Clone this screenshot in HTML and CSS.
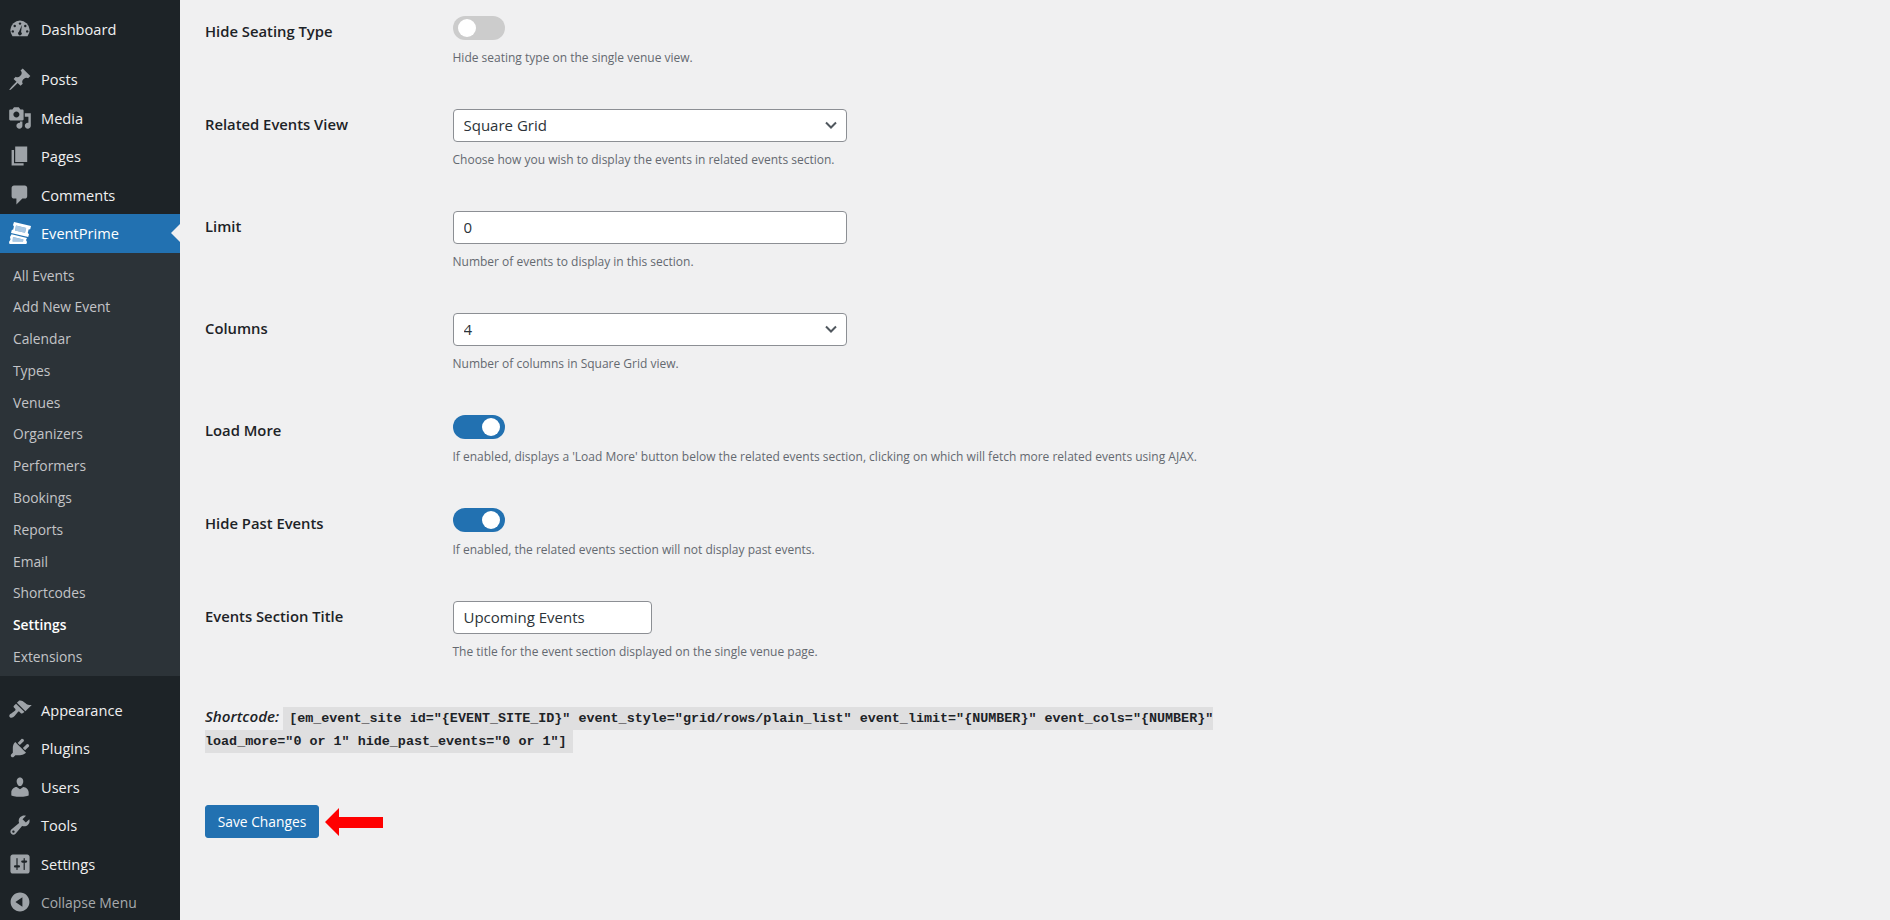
FILE: index.html
```html
<!DOCTYPE html>
<html lang="en">
<head>
    <meta charset="UTF-8">
    <meta name="viewport" content="width=device-width, initial-scale=1.0">
    <title>Venue Settings</title>
    <link rel="stylesheet" href="styles.css">
</head>
<body>
    <nav class="sidebar">
        <ul class="menu">
            <li class="menu-item group-end">
                <svg class="menu-icon" viewBox="0 0 20 20"><path d="M3.76 16h12.48A8 8 0 1 0 3.76 16z"/><g fill="#1d2327"><circle cx="10" cy="5.5" r="1"/><circle cx="5.6" cy="7.5" r="1"/><circle cx="14.4" cy="7.5" r="1"/><circle cx="4" cy="12" r="1"/><circle cx="16" cy="12" r="1"/><path d="M11.6 6.6L10.9 12.4a1.6 1.6 0 1 1-1.8-.1z"/></g></svg>
                <span>Dashboard</span>
            </li>
            <li class="menu-item">
                <svg class="menu-icon" viewBox="0 0 20 20"><path d="M10.44 3.02l1.82-1.82 6.36 6.35-1.83 1.82c-1.05-.68-2.48-.57-3.41.36l-.75.75c-.92.93-1.04 2.35-.35 3.41l-1.83 1.82-2.41-2.41-2.89 2.89c-1.95 1.95-3.75 3.3-4.02 3.03-.27-.27 1.08-2.07 3.03-4.02l2.89-2.89-2.41-2.41 1.82-1.83c1.06.69 2.48.57 3.41-.35l.75-.75c.93-.93 1.04-2.36.36-3.41z"/></svg>
                <span>Posts</span>
            </li>
            <li class="menu-item">
                <svg class="menu-icon" viewBox="0 0 20 20"><path fill-rule="evenodd" d="M13 11V4c0-.55-.45-1-1-1h-1.67L9 1H5L3.67 3H2c-.55 0-1 .45-1 1v7c0 .55.45 1 1 1h10c.55 0 1-.45 1-1zM7 4.5c1.38 0 2.5 1.12 2.5 2.5S8.38 9.5 7 9.5 4.5 8.38 4.5 7 5.62 4.5 7 4.5zM14 6h5v10.5c0 1.38-1.12 2.5-2.5 2.5S14 17.88 14 16.5s1.12-2.5 2.5-2.5c.17 0 .34.02.5.05V9h-3V6zm-4 8.05V13h2v3.5c0 1.38-1.12 2.5-2.5 2.5S7 17.88 7 16.5 8.12 14 9.5 14c.17 0 .34.02.5.05z"/></svg>
                <span>Media</span>
            </li>
            <li class="menu-item">
                <svg class="menu-icon" viewBox="0 0 20 20"><path d="M6 15V2h10v13H6zm-1 1h8v2H3V5h2v11z"/></svg>
                <span>Pages</span>
            </li>
            <li class="menu-item">
                <svg class="menu-icon" viewBox="0 0 20 20"><path d="M5 2h9c1.1 0 2 .9 2 2v7c0 1.1-.9 2-2 2h-2l-5 5v-5H5c-1.1 0-2-.9-2-2V4c0-1.1.9-2 2-2z"/></svg>
                <span>Comments</span>
            </li>
            <li class="menu-item current">
                <svg class="menu-icon" viewBox="0 0 24 24">
                    <path fill="#a9c8e4" d="M8 4.600L7 9.400l10 2.300 1.200-4.700zM5 16l-.4 4.600H15l.4-2.100z"/>
                    <path fill-rule="evenodd" d="M6 1L23 5l-.8 3.200-1.600.4-.8 3.400 1.200 1.200-.8 2.800L3 12l.8-3 1.400-.6.7-3L5 4zM8 4.600L7 9.400l10 2.300 1.200-4.700zM3.500 13.200L19 17l-1 2 1 2-.6 2H1.500L1 21l1.500-2.500L2 16zM5 16l-.4 4.600H15l.4-2.100z"/>
                </svg>
                <span>EventPrime</span>
            </li>
        </ul>
        <ul class="submenu">
            <li>All Events</li>
            <li>Add New Event</li>
            <li>Calendar</li>
            <li>Types</li>
            <li>Venues</li>
            <li>Organizers</li>
            <li>Performers</li>
            <li>Bookings</li>
            <li>Reports</li>
            <li>Email</li>
            <li>Shortcodes</li>
            <li class="active">Settings</li>
            <li>Extensions</li>
        </ul>
        <ul class="menu menu-lower">
            <li class="menu-item">
                <svg class="menu-icon" viewBox="0 0 20 20"><path d="M14.48 11.06L7.41 3.99l1.5-1.5c.5-.56 2.3-.47 3.51.32 1.21.8 1.43 1.28 2.91 2.1 1.18.64 2.45 1.26 4.45.85zm-.71.71L6.7 4.7 4.93 6.47c-.39.39-.39 1.02 0 1.41l1.06 1.06c.39.39.39 1.03 0 1.42-.6.6-1.43 1.11-2.21 1.69-.35.26-.7.53-1.01.84C1.43 13.23.5 14.91 1.6 16.02s2.79.18 4.12-1.16c.31-.31.58-.66.84-1.01.58-.78 1.09-1.61 1.69-2.21.39-.39 1.03-.39 1.42 0l1.06 1.06c.39.39 1.02.39 1.41 0z"/></svg>
                <span>Appearance</span>
            </li>
            <li class="menu-item">
                <svg class="menu-icon" viewBox="0 0 20 20"><path d="M13.11 4.36L9.87 7.6 8 5.73l3.24-3.24c.35-.34 1.05-.2 1.56.32.52.51.66 1.21.31 1.55zm-8 1.77l.91-1.12 9.01 9.01-1.19.84c-.71.71-2.63 1.16-3.82 1.16H6.14L4.9 17.26c-.59.59-1.54.59-2.12 0-.59-.58-.59-1.53 0-2.12l1.24-1.24v-3.88c0-1.13.4-3.19 1.09-3.89zm7.26 3.97l3.24-3.24c.34-.35 1.04-.21 1.55.31.52.51.66 1.21.31 1.55l-3.24 3.25z"/></svg>
                <span>Plugins</span>
            </li>
            <li class="menu-item">
                <svg class="menu-icon" viewBox="0 0 20 20"><path d="M10 9.25c-2.27 0-2.73-3.44-2.73-3.44C7 4.02 7.82 2 9.97 2c2.16 0 2.98 2.02 2.71 3.81 0 0-.41 3.44-2.68 3.44zm0 2.57L12.72 10c2.39 0 4.52 2.33 4.52 4.530v2.490s-3.650 1.130-7.240 1.130c-3.650 0-7.240-1.130-7.240-1.130v-2.490c0-2.250 1.940-4.480 4.470-4.480z"/></svg>
                <span>Users</span>
            </li>
            <li class="menu-item">
                <svg class="menu-icon" viewBox="0 0 20 20"><path fill-rule="evenodd" d="M16.68 9.77c-1.34 1.34-3.3 1.67-4.95.99l-5.41 6.52c-.99.99-2.59.99-3.58 0s-.99-2.59 0-3.57l6.52-5.42c-.68-1.65-.35-3.61.99-4.95 1.28-1.28 3.12-1.62 4.72-1.06l-2.89 2.89 2.82 2.82 2.86-2.87c.53 1.58.18 3.39-1.08 4.65zM3.81 16.21c.4.39 1.04.39 1.43 0 .4-.4.4-1.04 0-1.43-.39-.4-1.03-.4-1.43 0-.39.39-.39 1.03 0 1.43z"/></svg>
                <span>Tools</span>
            </li>
            <li class="menu-item">
                <svg class="menu-icon" viewBox="0 0 20 20"><path fill-rule="evenodd" d="M18 16V4c0-1.1-.9-2-2-2H4c-1.1 0-2 .9-2 2v12c0 1.1.9 2 2 2h12c1.1 0 2-.9 2-2zM8 11h1c.55 0 1 .45 1 1s-.45 1-1 1H8v1.500c0 .28-.22.5-.5.5s-.5-.22-.5-.5V13H6c-.55 0-1-.45-1-1s.45-1 1-1h1V5.500c0-.28.22-.5.5-.5s.5.22.5.5V11zm5-2h-1c-.55 0-1-.45-1-1s.45-1 1-1h1V5.500c0-.28.22-.5.5-.5s.5.22.5.5V7h1c.55 0 1 .45 1 1s-.45 1-1 1h-1v5.500c0 .28-.22.5-.5.5s-.5-.22-.5-.5V9z"/></svg>
                <span>Settings</span>
            </li>
            <li class="menu-item collapse">
                <svg class="menu-icon" viewBox="0 0 20 20"><path fill-rule="evenodd" d="M10 2.160c4.330 0 7.840 3.510 7.840 7.840s-3.510 7.840-7.840 7.840S2.160 14.330 2.160 10 5.710 2.160 10 2.160zm2 11.720V6.120L6.180 9.970z"/></svg>
                <span>Collapse Menu</span>
            </li>
        </ul>
    </nav>

    <main class="content">
        <div class="form-row">
            <div class="row-label">Hide Seating Type</div>
            <div class="row-field">
                <span class="toggle"></span>
                <p class="desc">Hide seating type on the single venue view.</p>
            </div>
        </div>
        <div class="form-row">
            <div class="row-label">Related Events View</div>
            <div class="row-field">
                <select class="field field-wide"><option>Square Grid</option></select>
                <p class="desc">Choose how you wish to display the events in related events section.</p>
            </div>
        </div>
        <div class="form-row">
            <div class="row-label">Limit</div>
            <div class="row-field">
                <input class="field field-wide" type="text" value="0">
                <p class="desc">Number of events to display in this section.</p>
            </div>
        </div>
        <div class="form-row">
            <div class="row-label">Columns</div>
            <div class="row-field">
                <select class="field field-wide"><option>4</option></select>
                <p class="desc">Number of columns in Square Grid view.</p>
            </div>
        </div>
        <div class="form-row">
            <div class="row-label">Load More</div>
            <div class="row-field">
                <span class="toggle on"></span>
                <p class="desc">If enabled, displays a 'Load More' button below the related events section, clicking on which will fetch more related events using AJAX.</p>
            </div>
        </div>
        <div class="form-row">
            <div class="row-label">Hide Past Events</div>
            <div class="row-field">
                <span class="toggle on"></span>
                <p class="desc">If enabled, the related events section will not display past events.</p>
            </div>
        </div>
        <div class="form-row">
            <div class="row-label">Events Section Title</div>
            <div class="row-field">
                <input class="field field-short" type="text" value="Upcoming Events">
                <p class="desc">The title for the event section displayed on the single venue page.</p>
            </div>
        </div>

        <p class="shortcode"><em>Shortcode:</em> <code>[em_event_site id="{EVENT_SITE_ID}" event_style="grid/rows/plain_list" event_limit="{NUMBER}" event_cols="{NUMBER}" load_more="0 or 1" hide_past_events="0 or 1"]</code></p>

        <div class="actions">
            <button class="save-btn" type="button">Save Changes</button>
            <svg class="red-arrow" viewBox="0 0 58 28"><path d="M0 14L14 0v9h44v11H14v8z"/></svg>
        </div>
    </main>
</body>
</html>
```

FILE: styles.css
```css
* {
    box-sizing: border-box;
}

body {
    margin: 0;
    height: 920px;
    overflow: hidden;
    display: flex;
    background-color: #f0f0f1;
    font-family: 'Open Sans', 'Noto Sans', sans-serif;
    font-size: 13px;
    color: #1d2327;
}

/* left admin menu */
.sidebar {
    width: 180px;
    flex-shrink: 0;
    background-color: #1d2327;
    padding-top: 9.5px;
}

.menu, .submenu {
    list-style: none;
    margin: 0;
    padding: 0;
}

.menu-item {
    position: relative;
    display: flex;
    align-items: center;
    gap: 9px;
    height: 38.5px;
    padding-left: 8px;
    color: #f0f0f1;
    font-size: 14.6px;
}

.group-end {
    margin-bottom: 12px;
}

.menu-icon {
    width: 24px;
    height: 24px;
    flex-shrink: 0;
    fill: #9ea3a8;
}

.current {
    background-color: #2271b1;
    color: #fff;
}

.current .menu-icon {
    fill: #fff;
}

.current::after {
    content: "";
    position: absolute;
    right: 0;
    top: 10px;
    border: 9px solid transparent;
    border-right-color: #f0f0f1;
    border-left-width: 0;
}

.submenu {
    background-color: #2c3338;
    padding: 7px 0 3px;
    font-size: 13.8px;
    color: #c3c4c7;
}

.submenu li {
    height: 31.8px;
    line-height: 31.8px;
    padding-left: 13px;
}

.submenu .active {
    color: #fff;
    font-weight: 600;
}

.menu-lower {
    margin-top: 14.5px;
}

.collapse {
    color: #a7aaad;
    font-size: 13.9px;
}

/* settings form */
.content {
    flex: 1;
    min-width: 0;
    padding: 0.5px 0 0 25px;
}

.form-row {
    display: grid;
    grid-template-columns: 247.5px 1fr;
}

.row-label {
    padding-top: 20px;
    font-size: 14.8px;
    font-weight: 600;
    line-height: 20px;
}

.row-field {
    padding: 15px 0;
}

.desc {
    margin: 6px 0 0;
    height: 32.5px;
    font-size: 12px;
    line-height: 24px;
    color: #646970;
}

.toggle {
    position: relative;
    display: block;
    width: 52px;
    height: 24.5px;
    border-radius: 13px;
    background-color: #ccc;
}

.toggle::after {
    content: "";
    position: absolute;
    left: 5px;
    top: 3.5px;
    width: 18px;
    height: 18px;
    border-radius: 50%;
    background-color: #fff;
}

.toggle.on {
    background-color: #2271b1;
}

.toggle.on::after {
    left: 29px;
}

.field {
    display: block;
    height: 33.5px;
    border: 1px solid #8c8f94;
    border-radius: 4px;
    background-color: #fff;
    padding: 0 10px;
    font-family: inherit;
    font-size: 15px;
    color: #2c3338;
}

.field-wide {
    width: 394px;
}

.field-short {
    width: 199px;
}

select.field {
    appearance: none;
    background-image: url("data:image/svg+xml,%3Csvg xmlns='http://www.w3.org/2000/svg' viewBox='0 0 20 20'%3E%3Cpath d='M5 7.5l5 5 5-5' fill='none' stroke='%2350575e' stroke-width='2'/%3E%3C/svg%3E");
    background-repeat: no-repeat;
    background-position: right 5px center;
    background-size: 20px 20px;
}

.shortcode {
    width: 1015px;
    margin: 18px 0 0;
    font-size: 15.2px;
    line-height: 21px;
}

.shortcode em {
    font-weight: 600;
}

.shortcode code {
    background-color: #dfdfe0;
    padding: 4px 6px;
    font-family: 'Liberation Mono', monospace;
    font-size: 13.4px;
    font-weight: 700;
}

.actions {
    display: flex;
    align-items: center;
    gap: 6px;
    margin-top: 53.5px;
}

.save-btn {
    width: 114px;
    height: 33px;
    border: 1px solid #2271b1;
    border-radius: 3px;
    background-color: #2271b1;
    padding: 0;
    color: #fff;
    font-family: inherit;
    font-size: 13.8px;
}

.red-arrow {
    width: 58px;
    height: 28px;
    fill: #f00;
}
```
